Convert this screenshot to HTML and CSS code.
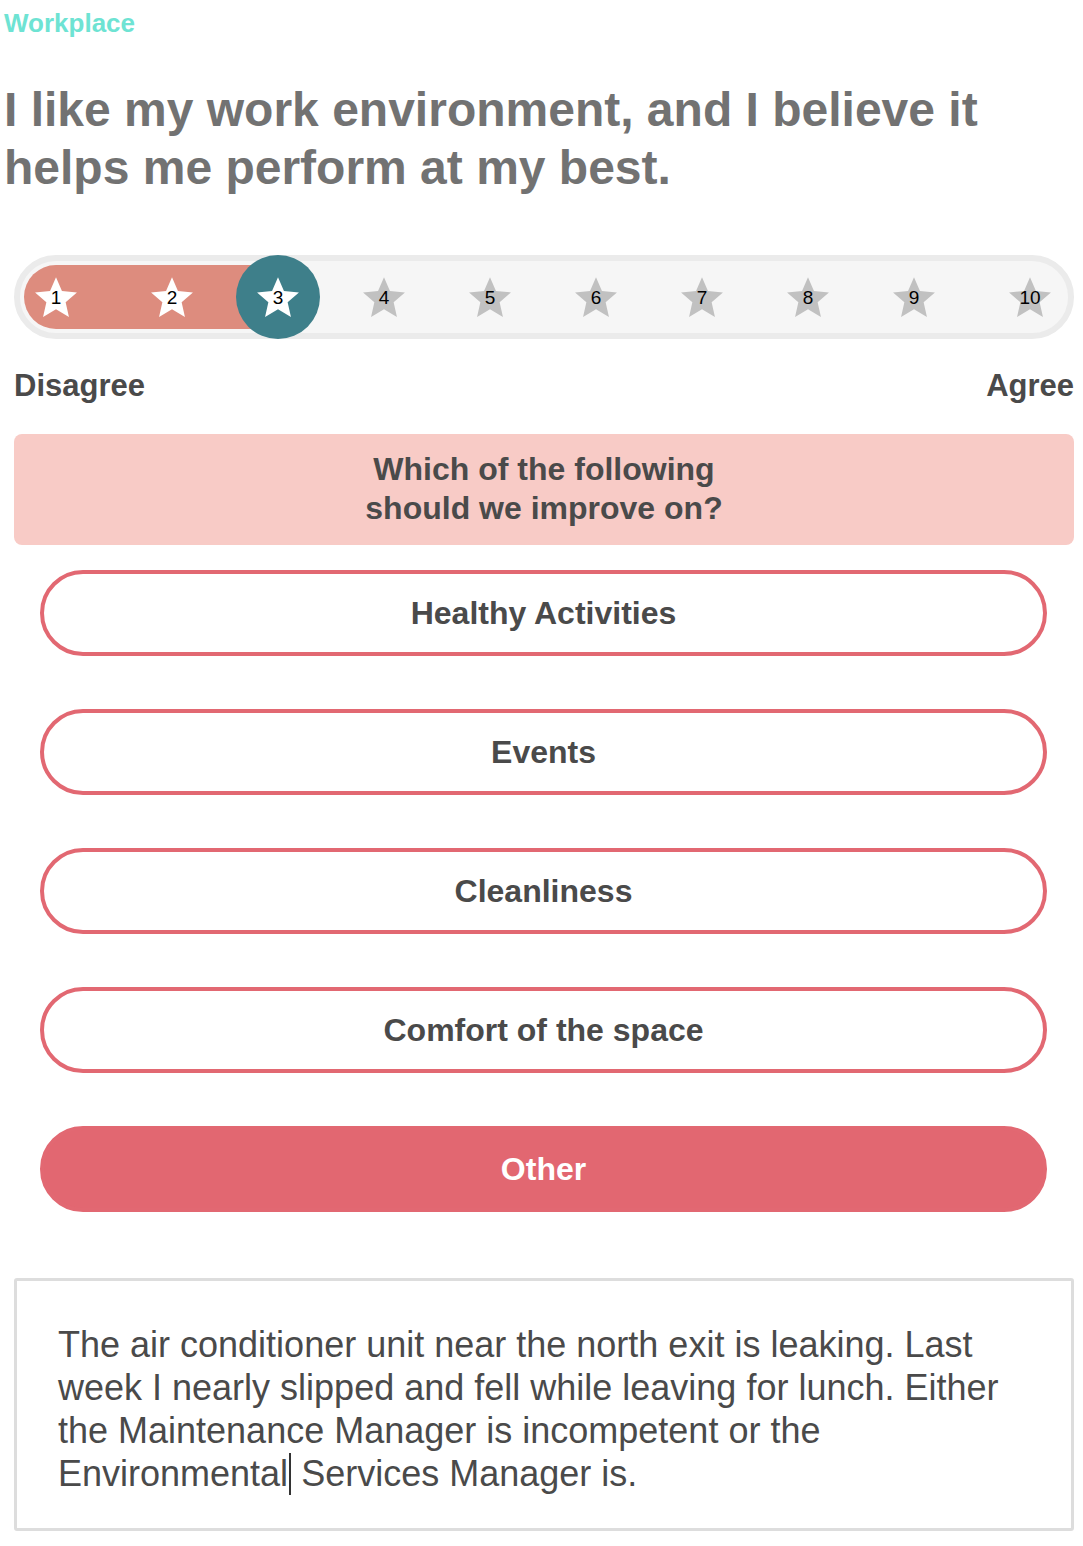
FILE: index.html
```html
<!DOCTYPE html>
<html lang="en">
<head>
    <meta charset="UTF-8">
    <meta name="viewport" content="width=device-width, initial-scale=1.0">
    <title>Workplace Survey</title>
    <link rel="stylesheet" href="styles.css">
</head>
<body>
    <div class="category">Workplace</div>
    <h1 class="question">I like my work environment, and I believe it helps me perform at my best.</h1>

    <div class="scale">
        <div class="scale-fill"></div>
        <div class="scale-stars">
            <div class="star on"><svg viewBox="0 0 100 95"><polygon points="50,2.5 63.5,33.9 97.6,37 71.9,59.6 79.4,93 50,75.5 20.6,93 28.1,59.6 2.4,37 36.5,33.9"/></svg><span>1</span></div>
            <div class="star on"><svg viewBox="0 0 100 95"><polygon points="50,2.5 63.5,33.9 97.6,37 71.9,59.6 79.4,93 50,75.5 20.6,93 28.1,59.6 2.4,37 36.5,33.9"/></svg><span>2</span></div>
            <div class="star on active"><svg viewBox="0 0 100 95"><polygon points="50,2.5 63.5,33.9 97.6,37 71.9,59.6 79.4,93 50,75.5 20.6,93 28.1,59.6 2.4,37 36.5,33.9"/></svg><span>3</span></div>
            <div class="star"><svg viewBox="0 0 100 95"><polygon points="50,2.5 63.5,33.9 97.6,37 71.9,59.6 79.4,93 50,75.5 20.6,93 28.1,59.6 2.4,37 36.5,33.9"/></svg><span>4</span></div>
            <div class="star"><svg viewBox="0 0 100 95"><polygon points="50,2.5 63.5,33.9 97.6,37 71.9,59.6 79.4,93 50,75.5 20.6,93 28.1,59.6 2.4,37 36.5,33.9"/></svg><span>5</span></div>
            <div class="star"><svg viewBox="0 0 100 95"><polygon points="50,2.5 63.5,33.9 97.6,37 71.9,59.6 79.4,93 50,75.5 20.6,93 28.1,59.6 2.4,37 36.5,33.9"/></svg><span>6</span></div>
            <div class="star"><svg viewBox="0 0 100 95"><polygon points="50,2.5 63.5,33.9 97.6,37 71.9,59.6 79.4,93 50,75.5 20.6,93 28.1,59.6 2.4,37 36.5,33.9"/></svg><span>7</span></div>
            <div class="star"><svg viewBox="0 0 100 95"><polygon points="50,2.5 63.5,33.9 97.6,37 71.9,59.6 79.4,93 50,75.5 20.6,93 28.1,59.6 2.4,37 36.5,33.9"/></svg><span>8</span></div>
            <div class="star"><svg viewBox="0 0 100 95"><polygon points="50,2.5 63.5,33.9 97.6,37 71.9,59.6 79.4,93 50,75.5 20.6,93 28.1,59.6 2.4,37 36.5,33.9"/></svg><span>9</span></div>
            <div class="star"><svg viewBox="0 0 100 95"><polygon points="50,2.5 63.5,33.9 97.6,37 71.9,59.6 79.4,93 50,75.5 20.6,93 28.1,59.6 2.4,37 36.5,33.9"/></svg><span>10</span></div>
        </div>
    </div>

    <div class="scale-labels">
        <span>Disagree</span>
        <span>Agree</span>
    </div>

    <div class="followup">Which of the following<br>should we improve on?</div>

    <div class="options">
        <button class="option">Healthy Activities</button>
        <button class="option">Events</button>
        <button class="option">Cleanliness</button>
        <button class="option">Comfort of the space</button>
        <button class="option selected">Other</button>
    </div>

    <div class="comment">The air conditioner unit near the north exit is leaking. Last week I nearly slipped and fell while leaving for lunch. Either the Maintenance Manager is incompetent or the Environmental<span class="caret"></span> Services Manager is.</div>
</body>
</html>
```

FILE: styles.css
```css
body {
    margin: 0;
    padding: 0 9px 0 4px;
    font-family: "Liberation Sans", Arial, sans-serif;
    color: #4a4a4a;
    background: #fff;
}
.category {
    color: #6ee3d3;
    font-size: 26px;
    font-weight: bold;
    line-height: 30px;
    margin-top: 8px;
}
.question {
    color: #727272;
    font-size: 48px;
    line-height: 58px;
    font-weight: bold;
    margin: 43px 0 0 0;
}
.scale {
    position: relative;
    margin: 58px 0 0 10px;
    height: 72px;
    border: 6px solid #ebebeb;
    border-radius: 42px;
    background: #f6f6f6;
}
.scale-fill {
    position: absolute;
    left: 4px;
    top: 4px;
    bottom: 4px;
    width: 258px;
    background: #dd8c7e;
    border-radius: 32px 0 0 32px;
}
.scale-stars {
    position: relative;
    display: flex;
    align-items: center;
    height: 72px;
    padding: 0 14px;
    gap: 62px;
}
.star {
    position: relative;
    width: 44px;
    height: 42px;
}
.star:first-child {
    margin-right: 10px;
}
.star:last-child {
    margin-left: 10px;
}
.star svg {
    position: relative;
    display: block;
    width: 44px;
    height: 42px;
    fill: #c1c1c1;
}
.star.on svg {
    fill: #fff;
}
.star.active::before {
    content: "";
    position: absolute;
    left: -20px;
    top: -21px;
    width: 84px;
    height: 84px;
    border-radius: 50%;
    background: #3e7f8a;
}
.star span {
    position: absolute;
    left: 0;
    right: 0;
    top: 12px;
    text-align: center;
    font-size: 19px;
    line-height: 20px;
    color: #000;
}
.scale-labels {
    display: flex;
    justify-content: space-between;
    margin: 29px 0 0 10px;
    font-size: 31px;
    font-weight: bold;
    line-height: 36px;
}
.followup {
    margin: 30px 0 0 10px;
    padding: 16px 0 17px;
    background: #f8cbc6;
    border-radius: 8px;
    text-align: center;
    font-size: 32px;
    font-weight: bold;
    line-height: 39px;
}
.options {
    display: flex;
    flex-direction: column;
    gap: 53px;
    margin: 25px 27px 0 36px;
}
.option {
    height: 86px;
    border: 4px solid #e26872;
    border-radius: 43px;
    background: #fff;
    font-family: "Liberation Sans", Arial, sans-serif;
    font-size: 32px;
    font-weight: bold;
    color: #4a4a4a;
    cursor: pointer;
}
.option.selected {
    background: #e26771;
    color: #fff;
}
.comment {
    margin: 66px 0 0 10px;
    border: 3px solid #dddddd;
    border-radius: 3px;
    padding: 42px 38px 33px 41px;
    font-size: 36px;
    line-height: 43px;
    color: #4a4a4a;
}
.caret {
    display: inline-block;
    width: 2px;
    height: 42px;
    margin-left: 1px;
    vertical-align: -9px;
    background: #333;
}
```
